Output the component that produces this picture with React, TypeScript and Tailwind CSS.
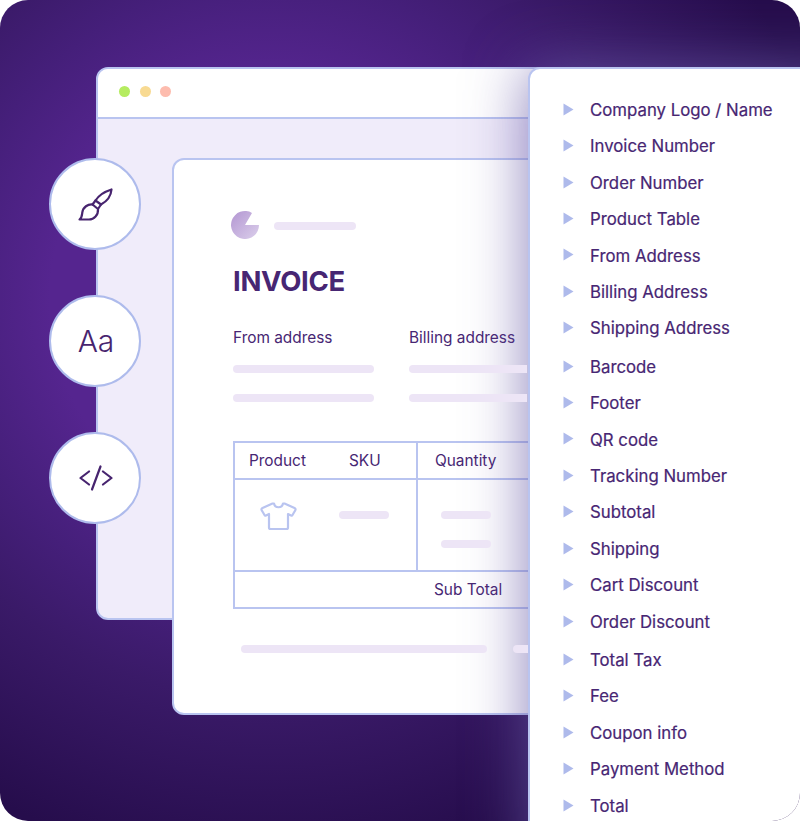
const items: string[][] = [
  ["Company Logo / Name", "Invoice Number", "Order Number", "Product Table", "From Address", "Billing Address", "Shipping Address"],
  ["Barcode", "Footer", "QR code", "Tracking Number", "Subtotal", "Shipping", "Cart Discount", "Order Discount"],
  ["Total Tax", "Fee", "Coupon info", "Payment Method", "Total"],
];

function Bar({ className }: { className: string }) {
  return <div className={"relative z-20 h-2 rounded-full bg-[#ede5f6] " + className} />;
}

function Circle({ children }: { children: React.ReactNode }) {
  return (
    <div className="flex h-[92px] w-[92px] items-center justify-center rounded-full border-2 border-[#aebbec] bg-white">
      {children}
    </div>
  );
}

function Row({ label }: { label: string }) {
  return (
    <li className="flex h-[36.45px] items-center">
      <svg width="11" height="13" viewBox="0 0 11 13" className="mb-[2px] mr-[16px] shrink-0">
        <path d="M0.5 0.5 L10.5 6.5 L0.5 12.5 Z" fill="#aebaeb" />
      </svg>
      <span className="text-[16.8px] leading-none text-[#472673] [-webkit-text-stroke:0.2px_#472673]">{label}</span>
    </li>
  );
}

export default function App() {
  return (
    <div className="h-[821px] w-[800px] bg-white font-['Inter',sans-serif]">
      <div className="relative h-[821px] w-[800px] overflow-hidden rounded-[28px] bg-[radial-gradient(circle_at_270px_300px,#55258f_0px,#55258f_220px,#451f7a_320px,#3a1a68_400px,#260d4c_570px)]">
        {/* browser window */}
        <div className="absolute left-[96px] top-[67px] h-[553px] w-[600px] overflow-hidden rounded-[12px] border-2 border-[#b9c4f0] bg-[#f0ecfa]">
          <div className="flex h-[50px] items-center gap-[9.6px] border-b-2 border-[#b9c4f0] bg-white pb-[3px] pl-[21px]">
            <span className="h-[11px] w-[11px] rounded-full bg-[#b5ec60]" />
            <span className="h-[11px] w-[11px] rounded-full bg-[#f8da92]" />
            <span className="h-[11px] w-[11px] rounded-full bg-[#fdbcae]" />
          </div>
        </div>

        {/* invoice sheet */}
        <div className="absolute left-[172px] top-[158px] h-[557px] w-[600px] rounded-[12px] border-2 border-[#b9c4f0] bg-white pl-[59px] text-[#472673]">
          <div className="ml-[-2px] mt-[51px] flex items-center">
            <svg width="28" height="28" viewBox="0 0 28 28">
              <defs>
                <linearGradient id="g" x1="0" y1="0" x2="1" y2="1">
                  <stop offset="0" stopColor="#b396d2" />
                  <stop offset="1" stopColor="#dbcfeb" />
                </linearGradient>
              </defs>
              <path d="M14 14 L28 14 A14 14 0 1 1 21 1.9 Z" fill="url(#g)" />
            </svg>
            <Bar className="ml-[15px] mt-[2px] w-[82px]" />
          </div>
          <h1 className="mt-[22px] text-[27.5px] font-bold leading-[40px] tracking-[-0.3px]">INVOICE</h1>
          <div className="mt-[27px] flex">
            <div className="w-[176px] shrink-0">
              <p className="text-[15.4px] leading-[20px]">From address</p>
              <Bar className="mt-[17px] w-[141px]" />
              <Bar className="mt-[21px] w-[141px]" />
            </div>
            <div className="w-[118px] shrink-0">
              <p className="whitespace-nowrap text-[15.4px] leading-[20px]">Billing address</p>
              <Bar className="mt-[17px] w-[118px] rounded-r-none" />
              <Bar className="mt-[21px] w-[118px] rounded-r-none" />
            </div>
          </div>

          {/* table */}
          <div className="mt-[38.5px] w-[400px] border-2 border-[#b9c4f0] text-[15.4px]">
            <div className="grid grid-cols-[183px_1fr] border-b-2 border-[#b9c4f0]">
              <div className="flex h-[35.5px] items-center border-r-2 border-[#b9c4f0] pl-[14px]">
                <span className="w-[100px]">Product</span>
                <span>SKU</span>
              </div>
              <div className="flex h-[35.5px] items-center pl-[17px]">Quantity</div>
            </div>
            <div className="grid grid-cols-[183px_1fr] border-b-2 border-[#b9c4f0]">
              <div className="flex h-[90px] items-start border-r-2 border-[#b9c4f0] pl-[24px] pt-[21px]">
                <svg width="40" height="30" viewBox="0 0 40 30" fill="none" stroke="#b9c4f0" strokeWidth="2.2" strokeLinejoin="round">
                  <path d="M13.5 2.5 L3.5 7 Q2 7.8 2.7 9.2 L5.5 14 Q6 15 7 14.5 L10 13 V26.5 Q10 28 11.5 28 H27.5 Q29 28 29 26.5 V13 L32 14.5 Q33 15 33.5 14 L36.3 9.2 Q37 7.8 35.5 7 L25.5 2.5 H24 C23 7.5 16 7.5 15 2.5 Z" />
                </svg>
                <Bar className="ml-[40px] mt-[10px] w-[50px]" />
              </div>
              <div className="flex h-[90px] flex-col pl-[23px] pt-[31px]">
                <Bar className="w-[50px]" />
                <Bar className="mt-[21px] w-[50px]" />
              </div>
            </div>
            <div className="flex h-[35px] items-center pl-[199px]">Sub Total</div>
          </div>

          <div className="ml-[8px] mt-[36px] flex">
            <Bar className="w-[246px]" />
            <Bar className="ml-[26px] w-[15px] rounded-r-none" />
          </div>
        </div>

        {/* side tool buttons */}
        <div className="absolute left-[49px] top-[158px] z-30 flex flex-col gap-[45px]">
          <Circle>
            <svg width="35" height="33" viewBox="0 0 35 33" fill="none" stroke="#47246f" strokeWidth="2.2" strokeLinejoin="round" strokeLinecap="round" className="ml-[1px]">
              <path d="M1.5 31.5 C4 29.5 4 27 4.3 24.5 C5 19 10 16 14.5 16.5 L20 21 C20.5 27 16 31.5 11 31.5 Z" />
              <path d="M14.5 16.5 L17.5 12.5 L23 16.5 L20 21" />
              <path d="M17.5 12.5 C21 7 27 3.5 33.5 1.5 C33 8 29.5 13 23 16.5" />
            </svg>
          </Circle>
          <Circle>
            <span className="ml-[2px] mt-[-1px] text-[30px] font-light leading-none text-[#47246f]">Aa</span>
          </Circle>
          <Circle>
            <svg width="34" height="26" viewBox="0 0 34 26" fill="none" stroke="#47246f" strokeWidth="2.2" strokeLinecap="round" strokeLinejoin="round" className="ml-[2px]">
              <path d="M10 6.5 L1.5 13 L10 19.5" />
              <path d="M24 6.5 L32.5 13 L24 19.5" />
              <path d="M21.5 1.5 L13 24.5" />
            </svg>
          </Circle>
        </div>

        {/* field list panel */}
        <div className="absolute left-[528px] top-[67px] z-10 h-[800px] w-[320px] rounded-[12px] border-2 border-[#b9c4f0] bg-white pl-[33px] pt-[23px] shadow-[0_0_60px_rgba(103,88,165,0.76)]">
          {items.map((group, i) => (
            <ul key={i} className={i > 0 ? "mt-[1.8px]" : ""}>
              {group.map((label) => (
                <Row key={label} label={label} />
              ))}
            </ul>
          ))}
        </div>
      </div>
    </div>
  );
}
